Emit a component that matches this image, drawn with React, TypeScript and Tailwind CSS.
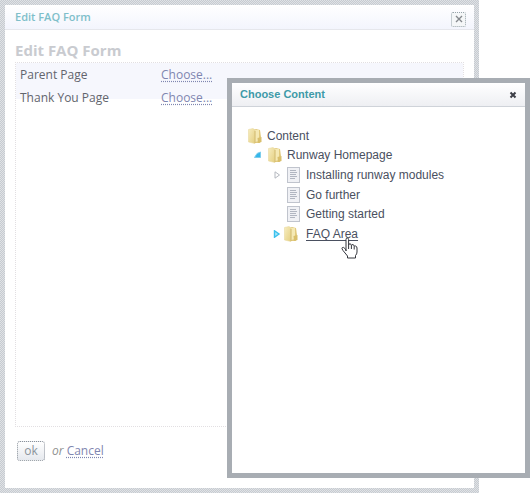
import React from "react";

function Folder() {
  return (
    <svg width="14" height="16" viewBox="0 0 14 16" aria-hidden="true" className="shrink-0">
      <defs>
        <linearGradient id="folderFront" x1="0" x2="1" y1="0" y2="1">
          <stop offset="0" stopColor="#f7edc0" />
          <stop offset="1" stopColor="#e4cf80" />
        </linearGradient>
      </defs>
      <path d="M5 2 L8 1 L12 2 L13 9 L12 15 L6 15 Z" fill="#e2ca7e" />
      <path d="M7 2 L11 2 L11 13 L7 14 Z" fill="#f5e9b4" />
      <path d="M0.5 1.5 L5 0.5 L7 2 L7 15.5 L0.5 14 Z" fill="url(#folderFront)" stroke="#e6d596" strokeWidth="0.5" />
      <path d="M9.5 10 L13.5 9 L13.5 14 L10 15 Z" fill="#d9bf6c" />
      <path d="M7 3 V15" stroke="#cdb367" strokeWidth="0.8" />
    </svg>
  );
}

function Page() {
  return (
    <svg width="13" height="16" viewBox="0 0 13 16" aria-hidden="true" className="shrink-0">
      <rect x="0.5" y="0.5" width="12" height="15" fill="#f0f1f5" stroke="#c0c4cd" />
      <path d="M3 3.5h6M3 5.5h7M3 7.5h6M3 9.5h7M3 11.5h5" stroke="#b1b6c1" />
    </svg>
  );
}

function Arrow({ kind }: { kind: "open" | "closed" | "active" }) {
  return (
    <svg width="8" height="8" viewBox="0 0 8 8" aria-hidden="true">
      {kind === "open" && <path d="M0.5 6.5 L3 2.5 L6.5 1 L6.5 6.5 Z" fill="#35b6ea" stroke="#7ccdec" />}
      {kind === "closed" && <path d="M2 0.8 L6.5 4 L2 7.2 Z" fill="#fff" stroke="#b4b8bf" />}
      {kind === "active" && <path d="M1.5 0.8 L6 4 L1.5 7.2 Z" fill="#a5e5fa" stroke="#3cc0ec" strokeWidth="1.4" />}
    </svg>
  );
}

function Hand() {
  return (
    <svg width="17" height="22" viewBox="0 0 17 22" aria-hidden="true">
      <path
        d="M5 14 V2.5 Q5 1 6.3 1 Q7.6 1 7.6 2.5 V8 Q7.8 6.6 9 6.8 Q10.4 7 10.4 8.6 Q10.8 7.3 12 7.6 Q13.2 8 13.2 9.4 Q13.6 8.6 14.6 9 Q16 9.4 16 11 V15 Q16 17 14.5 18.5 V21 H6.5 V19 L2 13.5 Q0.3 11.4 1.3 10.6 Q2.5 9.8 3.8 11.4 L5 13 Z"
        fill="#fff"
        stroke="#34363d"
        strokeLinejoin="round"
      />
      <path d="M7.6 8 V12 M10.4 8.6 V12 M13.2 9.4 V12.5" stroke="#34363d" fill="none" />
    </svg>
  );
}

type Item = {
  label: string;
  depth: string;
  icon: "folder" | "page";
  arrow?: "open" | "closed" | "active";
};

const items: Item[] = [
  { label: "Content", depth: "pl-0", icon: "folder" },
  { label: "Runway Homepage", depth: "pl-5", icon: "folder", arrow: "open" },
  { label: "Installing runway modules", depth: "pl-[39px]", icon: "page", arrow: "closed" },
  { label: "Go further", depth: "pl-[39px]", icon: "page" },
  { label: "Getting started", depth: "pl-[39px]", icon: "page" },
  { label: "FAQ Area", depth: "pl-[39px]", icon: "folder", arrow: "active" },
];

function TreeItem({ item }: { item: Item }) {
  const active = item.arrow === "active";
  return (
    <li className={`flex items-center ${item.depth}`}>
      <span className={active ? "w-[11px]" : "w-[14px]"}>{item.arrow && <Arrow kind={item.arrow} />}</span>
      <span className={active ? "w-[22px]" : "w-[19px]"}>{item.icon === "folder" ? <Folder /> : <Page />}</span>
      {active ? (
        <a href="#faq-area" className="relative underline underline-offset-2">
          {item.label}
          <span className="absolute top-[11px] left-[35px]">
            <Hand />
          </span>
        </a>
      ) : (
        <span>{item.label}</span>
      )}
    </li>
  );
}

const fields = [
  { label: "Parent Page", href: "#parent-page" },
  { label: "Thank You Page", href: "#thank-you-page" },
];

const link = "text-[#7f86b0] underline decoration-dotted underline-offset-2";

export default function App() {
  return (
    <main className="relative min-h-screen bg-white">
      <section
        aria-label="Edit FAQ Form"
        className="mr-[51px] flex min-h-screen flex-col bg-[repeating-conic-gradient(#c6cbd1_0_25%,#e0e2e5_0_50%)] bg-[length:2px_2px] p-[5px] font-['Open_Sans','Noto_Sans',sans-serif] text-[12px]"
      >
        <div className="flex flex-1 flex-col bg-white">
          <header className="flex h-[25px] items-center justify-between border-b border-[#e6e7ec] bg-linear-to-b from-white to-[#f3f5fd] pr-[8px] pl-[10px]">
            <h1 className="text-[11px] leading-[16px] font-semibold text-[#7fbfca]">Edit FAQ Form</h1>
            <button
              type="button"
              aria-label="Close form"
              className="mt-1 flex size-[15px] items-center justify-center rounded-xs border border-dotted border-[#98a5ab] bg-[#f5f7f8]"
            >
              <svg width="8" height="8" viewBox="0 0 8 8" aria-hidden="true" className="shrink-0">
                <path d="M1 1l6 6M7 1l-6 6" stroke="#85888d" strokeWidth="1.4" />
              </svg>
            </button>
          </header>
          <div className="flex flex-1 flex-col px-[10px] pt-[10px]">
            <h2 className="h-[22px] text-[15px] leading-[20px] font-bold text-[#c9cbd0]">Edit FAQ Form</h2>
            <div className="flex-1 border border-dotted border-[#e2dfe2]">
              <dl className="h-[36px] bg-[#f6f7fd]">
                {fields.map((field) => (
                  <div key={field.label} className="flex h-[23px] items-center pl-[4px]">
                    <dt className="w-[141px] font-medium text-[#62656d]">{field.label}</dt>
                    <dd>
                      <a href={field.href} aria-label={`${field.label}: Choose...`} className={link}>
                        Choose...
                      </a>
                    </dd>
                  </div>
                ))}
              </dl>
            </div>
            <footer className="flex h-[61px] items-start gap-[7px] pt-[14px] pl-[2px] leading-[20px]">
              <button
                type="button"
                className="flex h-[20px] w-[28px] items-center justify-center rounded-[3px] border border-dotted border-[#8b929b] bg-linear-to-b from-white to-[#e6e9ee] text-[#8b949b]"
              >
                ok
              </button>
              <p className="text-[#8f918f]">
                <em>or</em>{" "}
                <a href="#cancel" className={link}>
                  Cancel
                </a>
              </p>
            </footer>
          </div>
        </div>
      </section>
      <section
        role="dialog"
        aria-label="Choose Content"
        className="absolute top-[78px] right-0 bottom-[15px] left-[227px] border-[5px] border-[#a8adb3] bg-white font-['Liberation_Sans',Arial,sans-serif]"
      >
        <header className="flex h-6 items-center justify-between border-b border-[#cfd3d9] bg-linear-to-b from-white to-[#eeeff3] px-2">
          <h2 className="text-[11px] font-bold text-[#3e9aa8]">Choose Content</h2>
          <button type="button" aria-label="Close" className="flex">
            <svg width="8" height="8" viewBox="0 0 8 8" aria-hidden="true">
              <path d="M1.5 1.5l5 5M6.5 1.5l-5 5" stroke="#3c3e46" strokeWidth="2" />
            </svg>
          </button>
        </header>
        <ul className="mt-[19px] ml-[2px] grid h-[118px] grid-rows-6 text-[12px] leading-[16px] text-[#4a5060]">
          {items.map((item) => (
            <TreeItem key={item.label} item={item} />
          ))}
        </ul>
      </section>
    </main>
  );
}
